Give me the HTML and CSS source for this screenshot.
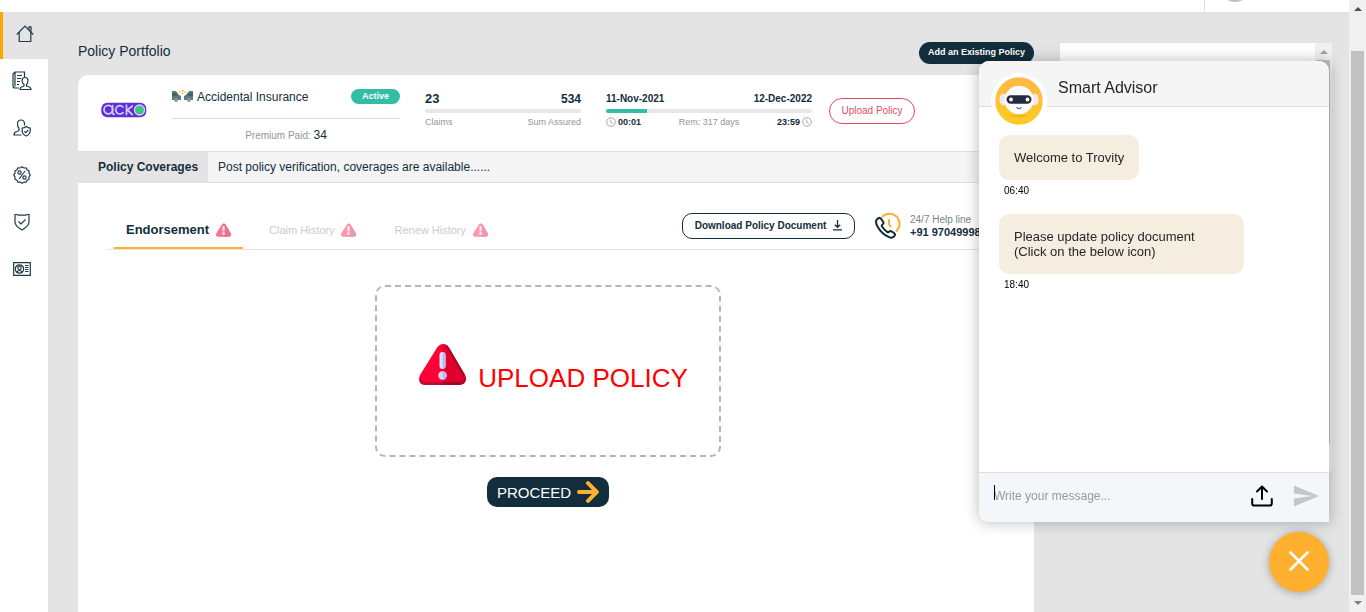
FILE: index.html
```html
<!DOCTYPE html>
<html lang="en">
<head>
<meta charset="utf-8">
<title>Policy Portfolio</title>
<link rel="stylesheet" href="styles.css">
</head>
<body>
<svg class="defs" aria-hidden="true">
  <symbol id="alert" viewBox="0 0 47 41">
    <path fill="#ff0037" d="M18.500 3Q23.500-3 28.500 3L46 31Q49 40 40 41H7Q-2 40 1 31Z"/>
    <path fill="#e0002b" d="M23.500 0Q27 0 29 3L46 31Q49 40 40 41H23.500Z"/>
    <path fill="#a80525" d="M23.500 38H40Q47 38 46 31Q49 40 40 41H23.500ZM26 0Q29 1 31 5L46 31L44 32L28 4Z"/>
    <path fill="#c10b30" d="M1 32Q1 38 7 38H23.500V41H7Q-2 41 1 32Z"/>
    <rect x="20.500" y="8" width="6" height="17" rx="3" fill="#dfe3ff"/>
    <circle cx="23.500" cy="31.500" r="4.200" fill="#d5dafb"/>
    <path fill="#b9bdf0" d="M23.500 8a3 3 0 0 1 3 3v11a3 3 0 0 1-3 3ZM23.500 27.300a4.200 4.200 0 0 1 0 8.400Z"/>
  </symbol>
  <symbol id="clock" viewBox="0 0 10 10">
    <g fill="none" stroke="#8d979c" stroke-width=".8"><circle cx="5" cy="5" r="4.300"/><path d="M4.700 2.500V5.300L6.800 6.500"/></g>
  </symbol>
</svg>
<div class="frame">
  <div class="app">
    <header class="topbar"><div class="account"><span class="avatar"></span></div></header>
    <div class="body">
      <nav class="sidebar" aria-label="Main">
        <a class="nav active" href="#home" aria-label="Home"><svg width="18" height="18" viewBox="0 0 18 18"><path d="M.8 9.500 9 1.200l8.200 8.300M3.200 7.500v9h11.600v-9M13 5V1.800h2V7"/></svg></a>
        <a class="nav" href="#policies" aria-label="Policies"><svg width="20" height="20" viewBox="0 0 20 20"><path d="M7 17H3Q1 17 1 15V3L3 1H12.500V6M3 1V15.500M5 4.500H10M5 7.500H9M5 10.500H8M5 13.500H7M8 18.500Q8 16 11 15.500L12 15V13.500Q10 12 10 9.500Q10 6.500 13 6.500Q16 6.500 16 9.500Q16 12 14.500 13.500V15L16 15.500Q19 16 19 18.500Z"/></svg></a>
        <a class="nav" href="#profile" aria-label="Insured people"><svg width="18" height="18" viewBox="0 0 18 18"><path d="M8.500 16H1Q1 13 4 12.500L6 11.500V9.500Q4.500 8 4.500 5Q4.500 1 8 1Q11.500 1 11.500 5V6.500M13.200 7.500Q15 9 17.200 9V12Q17 15.500 13.200 17Q9.500 15.500 9.200 12V9Q11.500 9 13.200 7.500ZM11.300 12.300 12.700 13.700 15.300 10.800"/></svg></a>
        <a class="nav" href="#offers" aria-label="Offers"><svg width="18" height="18" viewBox="0 0 18 18"><path d="M9 .8 11 2 13.200 1.800 14 3.800 16 4.800 16 7 17.200 9 16 11 16 13.200 14 14.200 13.200 16.200 11 16 9 17.200 7 16 4.800 16.200 4 14.200 2 13.200 2 11 .8 9 2 7 2 4.800 4 3.800 4.800 1.800 7 2ZM12 5 6 13"/><circle cx="6.500" cy="6.500" r="1.600"/><circle cx="11.500" cy="11.500" r="1.600"/></svg></a>
        <a class="nav" href="#coverage" aria-label="Coverage"><svg width="18" height="18" viewBox="0 0 18 18"><path d="M2 1.500H4L5 2.200H13L14 1.500H16V9Q16 13 9 17Q2 13 2 9ZM5.500 8.500 8 11 12.500 6.500"/></svg></a>
        <a class="nav" href="#card" aria-label="Contact card"><svg width="18" height="14" viewBox="0 0 18 14"><path d="M.7.700H17.300V13.300H.7ZM12 3.500H15.500M12 5.500H15.500M12 7.500H15.500M12 9.500H15.500M3.800 10.800Q4 8.500 6.500 8.500Q9 8.500 9.200 10.800"/><circle cx="6.500" cy="7" r="4.200"/><circle cx="6.500" cy="5.800" r="1.700"/></svg></a>
      </nav>
      <div class="content">
        <main class="main">
          <div class="heading"><h1>Policy Portfolio</h1><button class="add">Add an Existing Policy</button></div>
          <section class="policy">
            <svg class="logo" width="46" height="16" viewBox="0 0 46 16" role="img" aria-label="acko"><rect x=".3" y=".8" width="45" height="14.400" rx="6" fill="#5a2fd6"/><circle cx="38.500" cy="8" r="4" fill="#2ecf6f"/><g fill="none" stroke="#d9c9f7" stroke-width="1.700" stroke-linecap="round"><circle cx="7.300" cy="7.600" r="4.300"/><path d="M11.600 3.500V10.500Q11.600 12.300 13.200 12.300M22 5A4.200 4.200 0 1 0 22 10.600M25.500 3V12.500M31.300 4 26.300 8 31.300 12.500"/><circle cx="38.500" cy="8" r="4.900"/></g></svg>
            <div class="product">
              <div class="product-row"><svg width="21" height="13" viewBox="0 0 21 13"><path fill="#607986" d="M0 1H4L7 5 9 6V10H0ZM21 1H17L14 5 12 6V10H21Z"/><path fill="#455f6c" d="M0 3H4L6 6H0ZM21 3H17L15 6H21Z"/><circle cx="4" cy="10" r="2" fill="#87979f"/><circle cx="17" cy="10" r="2" fill="#87979f"/><path fill="#f8b91d" d="M7 1h1.500v1.500H7ZM10 0h1.500v2H10ZM12.500 1.500H14V3H12.500ZM9.500 3h2v1h-2Z"/></svg><span>Accidental Insurance</span><b class="badge">Active</b></div>
              <div class="premium">Premium Paid: <span>34</span></div>
            </div>
            <div class="stats">
              <div class="pair"><b class="claims">23</b><b>534</b></div>
              <div class="bar"></div>
              <div class="pair note"><span>Claims</span><span>Sum Assured</span></div>
            </div>
            <div class="term">
              <div class="pair dates"><b>11-Nov-2021</b><b>12-Dec-2022</b></div>
              <div class="bar"><div class="fill" style="width:20%"></div></div>
              <div class="pair note"><b><svg><use href="#clock"/></svg>00:01</b><span>Rem: 317 days</span><b>23:59<svg><use href="#clock"/></svg></b></div>
            </div>
            <button class="upload">Upload Policy</button>
          </section>
          <div class="coverages"><b>Policy Coverages</b><span>Post policy verification, coverages are available......</span></div>
          <section class="details">
            <div class="toolbar">
              <div class="tabs" role="tablist">
                <button class="tab current" role="tab" aria-selected="true">Endorsement<svg><use href="#alert"/></svg></button>
                <button class="tab" role="tab">Claim History<svg><use href="#alert"/></svg></button>
                <button class="tab" role="tab">Renew History<svg><use href="#alert"/></svg></button>
              </div>
              <button class="download">Download Policy Document<svg width="9" height="11" viewBox="0 0 9 11" fill="none" stroke="#122e3c" stroke-width="1.300"><path d="M4.500 0V7M1.800 4.700 4.500 7.300 7.200 4.700M0 9.800H9"/></svg></button>
              <div class="help">
                <svg width="26" height="26" viewBox="0 0 26 26" fill="none" stroke-linecap="round"><path stroke="#ffb02e" stroke-width="2" d="M7.500 3.500A9.500 9.500 0 1 1 21.500 18M14 7V11.500L15.500 13.500"/><path stroke="#122e3c" stroke-width="2" stroke-linejoin="round" d="M3 5.300C.5 7 .8 10.500 2.500 13.500C5 18 9 22 14 24.200C17 25.500 18.500 24.500 19.800 22.500Q20.500 21 19 20L16.500 18.300Q15.300 17.500 14.300 18.500Q13.300 19.600 12 18.800Q9 16.500 7 13.500Q6.200 12.300 7.500 11.500Q9 10.500 8.200 9L6.300 6Q5 4.200 3 5.300Z"/></svg>
                <div><small>24/7 Help line</small><b>+91 97049998</b></div>
              </div>
            </div>
            <div class="drop"><svg width="47" height="41"><use href="#alert"/></svg><span>UPLOAD POLICY</span></div>
            <button class="proceed">PROCEED<svg width="22" height="22" viewBox="0 0 22 22"><path d="M2 11H19.500M11 2.200 19.800 11 11 19.800" fill="none" stroke="#ffb02e" stroke-width="4" stroke-linecap="round" stroke-linejoin="round"/></svg></button>
          </section>
        </main>
        <aside class="side"><div class="track"><i class="up"></i><i class="thumb"></i></div></aside>
      </div>
    </div>
  </div>
  <div class="track page-track"><i class="up"></i><i class="thumb"></i><i class="down"></i></div>
</div>
<section class="chat" aria-label="Smart Advisor">
  <header class="chat-head">
    <svg class="bot" width="56" height="56" viewBox="0 0 56 56"><defs><linearGradient id="sun" x1=".6" y1="0" x2=".4" y2="1"><stop offset="0" stop-color="#ffb847"/><stop offset="1" stop-color="#ffcc20"/></linearGradient></defs><circle cx="28" cy="28" r="28" fill="#fff"/><circle cx="28" cy="28" r="23.700" fill="url(#sun)"/><ellipse cx="28" cy="43" rx="10" ry="1.200" fill="#d99a14" opacity=".4"/><ellipse cx="12.500" cy="26.500" rx="4" ry="6" fill="#eceaf0"/><ellipse cx="43.500" cy="26.500" rx="4" ry="6" fill="#eceaf0"/><ellipse cx="28" cy="27" rx="14.500" ry="14.300" fill="#fbfbfd"/><rect x="15.500" y="22.300" width="25" height="8.400" rx="4.200" fill="#252b42"/><circle cx="20" cy="26.500" r="1.900" fill="#fff"/><circle cx="36.500" cy="26.500" r="1.900" fill="#fff"/><path d="M25.500 34.500Q28 36.500 30.500 34.500" fill="none" stroke="#595666" stroke-width="1.200"/></svg>
    <h2>Smart Advisor</h2>
  </header>
  <div class="messages">
    <p class="bubble">Welcome to Trovity</p><time>06:40</time>
    <p class="bubble wide">Please update policy document<br>(Click on the below icon)</p><time>18:40</time>
  </div>
  <form class="composer">
    <span class="entry"><input type="text" aria-label="Message" placeholder="Write your message..."></span>
    <button type="button" aria-label="Upload"><svg width="22" height="22" viewBox="0 0 22 22" fill="none" stroke="#000" stroke-width="2" stroke-linecap="round" stroke-linejoin="round"><path d="M11 14V1.500M6 6.500 11 1.500 16 6.500M1.200 14V18.500Q1.200 20.600 3.300 20.600H18.700Q20.800 20.600 20.800 18.500V14"/></svg></button>
    <button type="button" aria-label="Send"><svg width="25" height="22" viewBox="0 0 25 22"><path fill="#c6c6c6" d="M0 .5 25 11 0 21.500V13.500L18 11 0 8.500Z"/></svg></button>
  </form>
</section>
<button class="close" aria-label="Close chat"><svg width="20" height="20" viewBox="0 0 20 20"><path d="M1.500 1.500 18.500 18.500M18.500 1.500 1.500 18.500" stroke="#fff" stroke-width="2.600" stroke-linecap="round"/></svg></button>
</body>
</html>
```
FILE: styles.css
```css
* { box-sizing: border-box; }
body { margin: 0; font-family: "Liberation Sans", Arial, sans-serif; color: #122e3c; background: #fff; overflow: hidden; }
button { font: inherit; color: inherit; border: 0; background: none; padding: 0; margin: 0; }
h1, h2, p { margin: 0; font-weight: 400; }
svg { display: block; flex: none; }
.defs { position: absolute; width: 0; height: 0; }
.frame { display: flex; height: 100vh; }
.app { flex: 1; min-width: 0; display: flex; flex-direction: column; }
.topbar { flex: none; height: 12px; display: flex; justify-content: flex-end; overflow: hidden; background: #fff; }
.account { width: 145px; border-left: 1px solid #dedede; padding-left: 15px; display: flex; align-items: flex-end; padding-bottom: 10px; }
.avatar { width: 30px; height: 30px; border-radius: 50%; background: #bdbdbd; flex: none; }
.body { flex: 1; min-height: 0; display: flex; }
.sidebar { width: 48px; flex: none; background: #fff; }
.nav { height: 47px; display: flex; align-items: center; justify-content: center; padding: 0 4px 4px 0; }
.nav svg { fill: none; stroke: #203b48; stroke-width: 1.2; }
.nav.active { background: #e4e4e4; border-left: 3px solid #ffa500; padding-right: 1px; }
.content { flex: 1; min-width: 0; display: flex; gap: 26px; padding: 30px 17px 0 30px; background: #e4e4e4; box-shadow: inset 0 4px 4px -4px #d8d8d8; }
.main { flex: 1; min-width: 0; display: flex; flex-direction: column; }
.heading { display: flex; justify-content: space-between; align-items: center; margin-bottom: 11px; }
h1 { font-size: 14px; line-height: 18px; padding-bottom: 4px; }
.add { height: 22px; padding: 0 9px 2px; border-radius: 11px; background: #122e3c; color: #fff; font-size: 9px; font-weight: 700; }
.policy { height: 76px; display: flex; align-items: flex-start; gap: 25px; padding: 14px 23px 0; background: #fff; border-radius: 10px 10px 0 0; }
.logo { margin-top: 13px; }
.product { width: 228px; }
.product-row { display: flex; align-items: center; gap: 4px; height: 30px; padding-bottom: 14px; border-bottom: 1px solid #dcdcdc; font-size: 12px; }
.badge { margin-left: auto; width: 49px; line-height: 15px; border-radius: 8px; background: #32bea6; color: #fff; text-align: center; font-size: 9px; }
.premium { font-size: 10px; line-height: 14px; padding-top: 9px; text-align: center; color: #8d979c; }
.premium span { font-size: 12px; color: #122e3c; }
.stats { width: 156px; font-size: 12px; }
.term { width: 206px; }
.pair { display: flex; justify-content: space-between; align-items: center; height: 20px; line-height: 18px; }
.claims { font-size: 13px; }
.dates { font-size: 10px; }
.bar { height: 4px; background: #e7e7e7; border-radius: 2px; overflow: hidden; }
.fill { height: 4px; background: #32bea6; }
.note { height: 18px; font-size: 9px; color: #8d979c; }
.note b { color: #122e3c; display: flex; align-items: center; gap: 2px; }
.note svg { width: 10px; height: 10px; }
.upload { width: 86px; height: 26px; margin: 9px 0 0 -8px; padding-bottom: 2px; border: 1px solid #df4b61; border-radius: 13px; color: #df4b61; font-size: 10px; }
.coverages { display: flex; height: 32px; line-height: 30px; font-size: 12px; background: #f4f4f4; border: solid #e1e1e1; border-width: 1px 0; }
.coverages b { width: 130px; padding-left: 20px; background: #e4e4e4; }
.coverages span { padding-left: 10px; }
.details { flex: 1; background: #fff; padding: 24px 45px 0 29px; display: flex; flex-direction: column; align-items: center; }
.toolbar { align-self: stretch; height: 43px; display: flex; align-items: stretch; border-bottom: 1px solid #e4e4e4; padding-left: 7px; }
.tabs { display: flex; gap: 14px; align-items: stretch; flex: 1; }
.tab { display: flex; align-items: center; gap: 7px; padding: 4px 12px 0; color: #c7ccd0; font-size: 11px; white-space: nowrap; }
.tab svg { width: 15px; height: 14px; opacity: .4; }
.tab.current { gap: 7px; color: #122e3c; font-size: 13px; font-weight: 700; border-bottom: 2px solid #ffb02e; padding-top: 5px; }
.tab.current svg { opacity: .55; }
.download { align-self: flex-start; height: 26px; width: 173px; margin: 6px 20px 0 0; padding-bottom: 2px; display: flex; align-items: center; justify-content: center; gap: 7px; border: 1px solid #122e3c; border-radius: 10px; font-size: 10px; font-weight: 700; }
.help { display: flex; align-items: flex-start; gap: 9px; padding-top: 6px; white-space: nowrap; width: 114px; }
.help small, .help b { display: block; line-height: 13px; }
.help small { font-size: 10px; color: #75828a; }
.help b { font-size: 11px; }
.drop { width: 346px; height: 172px; margin-top: 35px; border: 2px dashed #b5b5b5; border-radius: 10px; display: flex; align-items: center; justify-content: center; gap: 12px; padding: 14px 0 0 11px; color: #f00; font-size: 26px; }
.drop svg { margin-bottom: 28px; }
.proceed { height: 30px; width: 122px; margin-top: 20px; display: flex; align-items: center; justify-content: center; gap: 6px; border-radius: 10px; background: #122e3c; color: #fff; font-size: 15px; }
.side { width: 272px; height: 428px; margin-top: 1px; display: flex; justify-content: flex-end; background: #fff; }
.track { width: 17px; background: #f0f0f0; display: flex; flex-direction: column; align-items: center; flex: none; }
.up, .down { width: 0; height: 0; border: solid transparent; border-width: 0 4px 4px; border-bottom-color: #a0a0a0; margin: 7px 0 6px; flex: none; }
.thumb { width: 13px; height: 384px; background: #c1c1c1; }
.page-track .up { border-bottom-color: #505050; margin: 7px 0 40px; }
.page-track .thumb { flex: 1; }
.down { border-width: 4px 4px 0; border-top-color: #808080; margin: 6px 0 7px; }
.chat { position: fixed; right: 37px; bottom: 90px; width: 350px; height: 461px; display: flex; flex-direction: column; background: #fff; border-radius: 10px 10px 0 10px; box-shadow: 0 0 14px 1px rgba(0, 0, 0, .25); color: #262626; }
.chat-head { display: flex; align-items: flex-start; gap: 11px; height: 46px; padding: 12px 12px 0; background: #f5f5f5; border-bottom: 1px solid #dedede; border-radius: 10px 10px 0 0; }
h2 { font-size: 16px; line-height: 30px; }
.messages { flex: 1; padding: 28px 20px 0; font-size: 13px; line-height: 15px; }
.bubble { width: fit-content; padding: 15px; border-radius: 10px; background: #f6ede1; }
.wide { width: 245px; }
time { display: block; padding: 3px 5px 0; margin-bottom: 16px; font-size: 10px; color: #000; }
.composer { height: 50px; display: flex; align-items: center; gap: 21px; padding: 0 10px 3px 15px; background: #f3f7fa; border-top: 1px solid #dedede; border-radius: 0 0 0 10px; }
.entry { flex: 1; position: relative; }
.entry::before { content: ""; position: absolute; left: 0; top: -4px; width: 1px; height: 15px; background: #000; }
.entry input { width: 100%; border: 0; padding: 0; background: none; outline: 0; font: 12px "Liberation Sans", Arial, sans-serif; display: block; }
.entry input::placeholder { color: #999; opacity: 1; }
.close { position: fixed; right: 37px; bottom: 20px; width: 60px; height: 60px; border-radius: 50%; background: #ffb02e; display: flex; align-items: center; justify-content: center; padding-bottom: 2px; box-shadow: 0 1px 8px rgba(0, 0, 0, .3); }
```
